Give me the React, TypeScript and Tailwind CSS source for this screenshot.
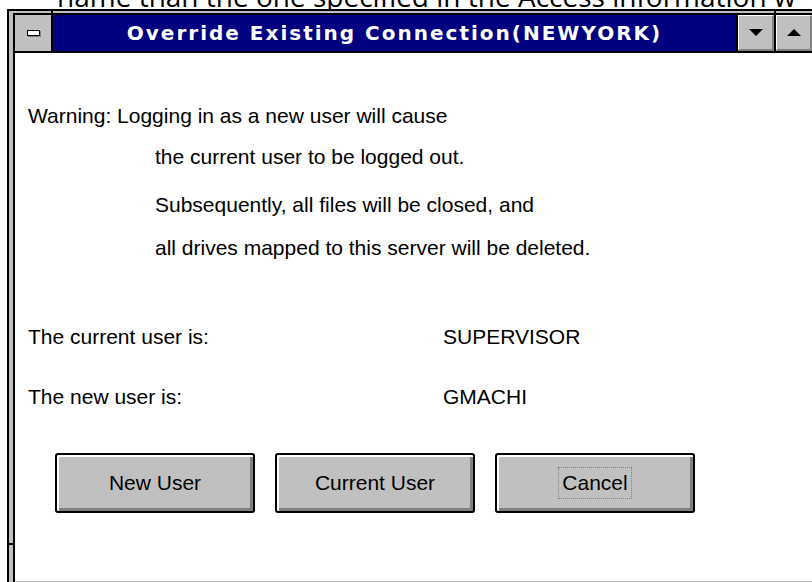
import React from "react";

type BtnProps = { label: string; focused?: boolean };

const DialogButton = ({ label, focused }: BtnProps) => (
    <button className="w-[200px] h-[60px] rounded-[3px] border-2 border-black bg-[#c0c0c0] shadow-[inset_2px_2px_0_#ffffff,inset_-3px_-3px_0_#808080] flex items-center justify-center text-[21px] leading-[24px] text-black">
        {focused ? (
            <span className="border border-dotted border-[#808080] px-[3px] py-[3px]">{label}</span>
        ) : (
            label
        )}
    </button>
);

const CaptionButton = ({ up }: { up?: boolean }) => (
    <div className="w-[36px] h-full bg-[#c0c0c0] border-t border-l border-white border-r-2 border-b-2 border-r-[#808080] border-b-[#808080] flex items-center justify-center">
        <svg width="14" height="7" viewBox="0 0 14 7">
            {up ? <polygon points="0,7 14,7 7,0" fill="#000" /> : <polygon points="0,0 14,0 7,7" fill="#000" />}
        </svg>
    </div>
);

export default function App() {
    return (
        <div className="relative w-[812px] h-[582px] overflow-hidden bg-white flex flex-col font-['Liberation_Sans',Arial,sans-serif] text-black">
            {/* tail of the help paragraph above the dialog */}
            <div className="h-[9px] overflow-hidden shrink-0">
                <div className="-mt-[18px] pl-[57px] whitespace-nowrap text-[28px] leading-[28px] font-['Open_Sans',sans-serif]">
                    name than the one specified in the Access information w
                </div>
            </div>

            {/* window frame */}
            <div className="flex-1 min-h-0 ml-[7px] w-[830px] flex flex-col border-l-2 border-t-2 border-black bg-[#c0c0c0] pl-[4px] pt-[2px]">
                <div className="flex-1 min-h-0 flex flex-col border-l-2 border-t-2 border-black">
                    {/* title bar */}
                    <div className="h-[38px] shrink-0 flex border-b-2 border-black">
                        <div className="w-[38px] h-full bg-[#c0c0c0] border-r-2 border-black flex items-center justify-center">
                            <div className="w-[13px] h-[6px] border border-black bg-white shadow-[1px_1px_0_#808080]" />
                        </div>
                        <div className="w-[685px] h-full bg-[#000080] border-r-2 border-black flex items-center justify-center text-white font-bold text-[20px] tracking-[2px] font-['DejaVu_Sans',sans-serif]">
                            Override Existing Connection(NEWYORK)
                        </div>
                        <CaptionButton />
                        <div className="w-[2px] h-full bg-black" />
                        <CaptionButton up />
                    </div>

                    {/* client area */}
                    <div className="flex-1 min-h-0 bg-white border-b border-[#c0c0c0] pl-[13px] pt-[51px] text-[21px] leading-[24px]">
                        <div>Warning: Logging in as a new user will cause</div>
                        <div className="mt-[17px] pl-[127px]">the current user to be logged out.</div>
                        <div className="mt-[24px] pl-[127px]">Subsequently, all files will be closed, and</div>
                        <div className="mt-[19px] pl-[127px]">all drives mapped to this server will be deleted.</div>

                        <div className="mt-[65px] grid grid-cols-[415px_1fr] gap-y-[36px]">
                            <div>The current user is:</div>
                            <div>SUPERVISOR</div>
                            <div>The new user is:</div>
                            <div>GMACHI</div>
                        </div>

                        <div className="mt-[44px] pl-[27px] flex gap-[20px]">
                            <DialogButton label="New User" />
                            <DialogButton label="Current User" />
                            <DialogButton label="Cancel" focused />
                        </div>
                    </div>
                </div>
            </div>

            {/* sizing-frame corner marks */}
            <div className="absolute left-[51px] top-[9px] w-[2px] h-[4px] bg-black" />
            <div className="absolute left-[774px] top-[9px] w-[2px] h-[4px] bg-black" />
            <div className="absolute left-[9px] top-[543px] w-[4px] h-[2px] bg-black" />
        </div>
    );
}
